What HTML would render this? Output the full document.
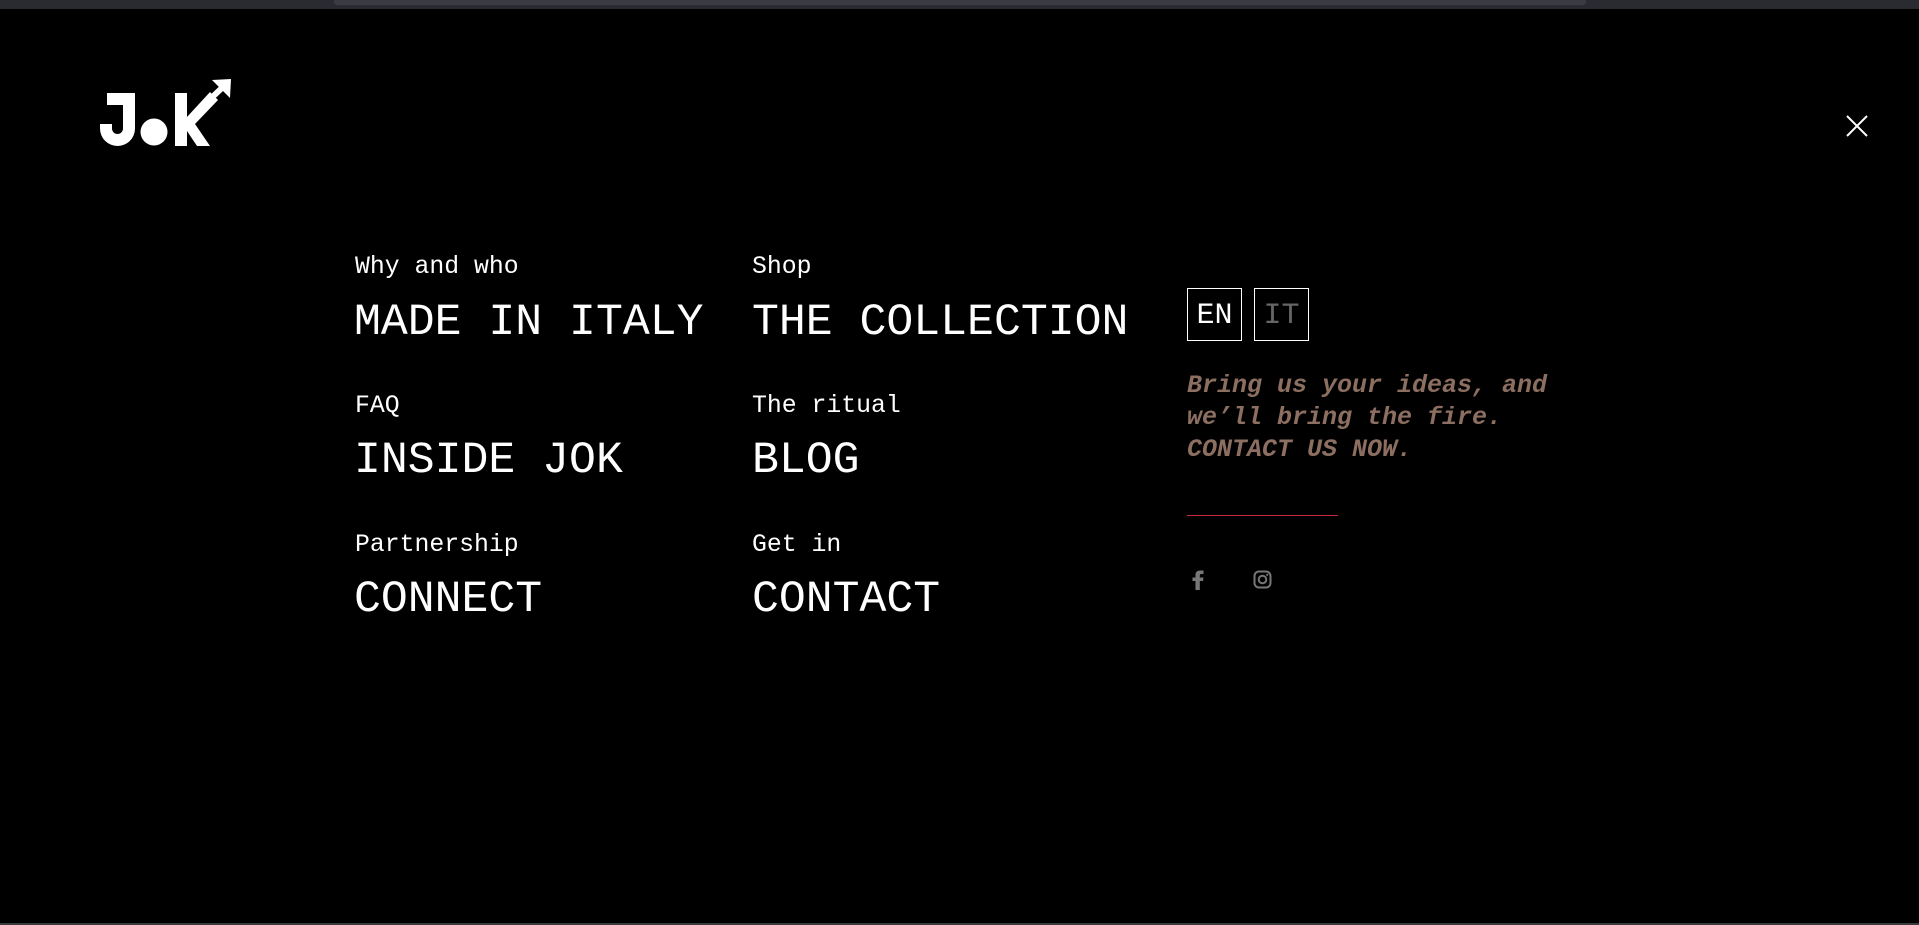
<!DOCTYPE html>
<html><head><meta charset="utf-8"><style>
html,body{margin:0;padding:0;background:#000;width:1919px;height:925px;overflow:hidden;position:relative;font-family:"Liberation Mono",monospace;color:#fff}
.top{position:absolute;left:0;top:0;width:1919px;height:9px;background:#2a2a31}
.top i{position:absolute;left:334px;top:0;width:1252px;height:5px;background:#3b3b44;border-radius:0 0 3px 3px}
.bot{position:absolute;left:0;top:923px;width:1919px;height:2px;background:#3a3a3a}
.s{position:absolute;font-size:24.8px;line-height:1;white-space:nowrap}
.b{position:absolute;font-size:44.8px;line-height:1;white-space:nowrap}
.lang{position:absolute;top:288px;width:53px;height:51px;border:1px solid #fff;font-size:30px;text-align:center;line-height:55px}
.tag{position:absolute;left:1187px;top:370px;font-size:25px;line-height:32px;font-weight:bold;font-style:italic;color:#8c6f61;white-space:nowrap}
</style></head><body>
<div class="top"><i></i></div>
<svg style="position:absolute;left:0;top:0" width="260" height="160">
<path d="M107 93H135V128.5A17.5 17.5 0 0 1 100 128.5V124H112V128.5A5.5 5.5 0 0 0 123 128.5V105H107Z" fill="#fff"/>
<circle cx="154" cy="132" r="13.5" fill="#fff"/>
<path d="M175 93H187V117L210 92 218 100 195 124 210 146H197L187 131V146H175Z" fill="#fff"/>
<path d="M205 104L224 86" stroke="#fff" stroke-width="6"/>
<path d="M212 80L231 79 230 98Z" fill="#fff"/>
</svg>
<svg style="position:absolute;left:1846px;top:115px" width="22" height="22"><path d="M1 1L21 21M21 1L1 21" stroke="#fff" stroke-width="2"/></svg>

<div class="s" style="left:355px;top:255px">Why and who</div>
<div class="b" style="left:354px;top:301px">MADE IN ITALY</div>
<div class="s" style="left:752px;top:255px">Shop</div>
<div class="b" style="left:752px;top:301px">THE COLLECTION</div>
<div class="s" style="left:355px;top:394px">FAQ</div>
<div class="b" style="left:354px;top:439px">INSIDE JOK</div>
<div class="s" style="left:752px;top:394px">The ritual</div>
<div class="b" style="left:752px;top:439px">BLOG</div>
<div class="s" style="left:355px;top:533px">Partnership</div>
<div class="b" style="left:354px;top:578px">CONNECT</div>
<div class="s" style="left:752px;top:533px">Get in</div>
<div class="b" style="left:752px;top:578px">CONTACT</div>

<div class="lang" style="left:1187px">EN</div>
<div class="lang" style="left:1254px;color:#666">IT</div>
<div class="tag">Bring us your ideas, and<br>we’ll bring the fire.<br>CONTACT US NOW.</div>
<div style="position:absolute;left:1187px;top:515px;width:151px;height:1px;background:#c8283c"></div>
<svg style="position:absolute;left:1190px;top:569px" width="16" height="22"><path d="M5.5 21V12H2.5V8.5H5.5V6C5.5 3 7 1.5 10.5 1.5H13.5V5H11.5C10.2 5 9.8 5.5 9.8 6.5V8.5H13.5L13 12H9.8V21Z" fill="#777"/></svg>
<svg style="position:absolute;left:1253px;top:570px" width="19" height="19"><rect x="1.5" y="1.5" width="16" height="16" rx="4.5" fill="none" stroke="#777" stroke-width="2"/><circle cx="9.5" cy="9.5" r="3.8" fill="none" stroke="#777" stroke-width="2"/><circle cx="14.2" cy="4.8" r="1.1" fill="#777"/></svg>
<div class="bot"></div>
</body></html>
